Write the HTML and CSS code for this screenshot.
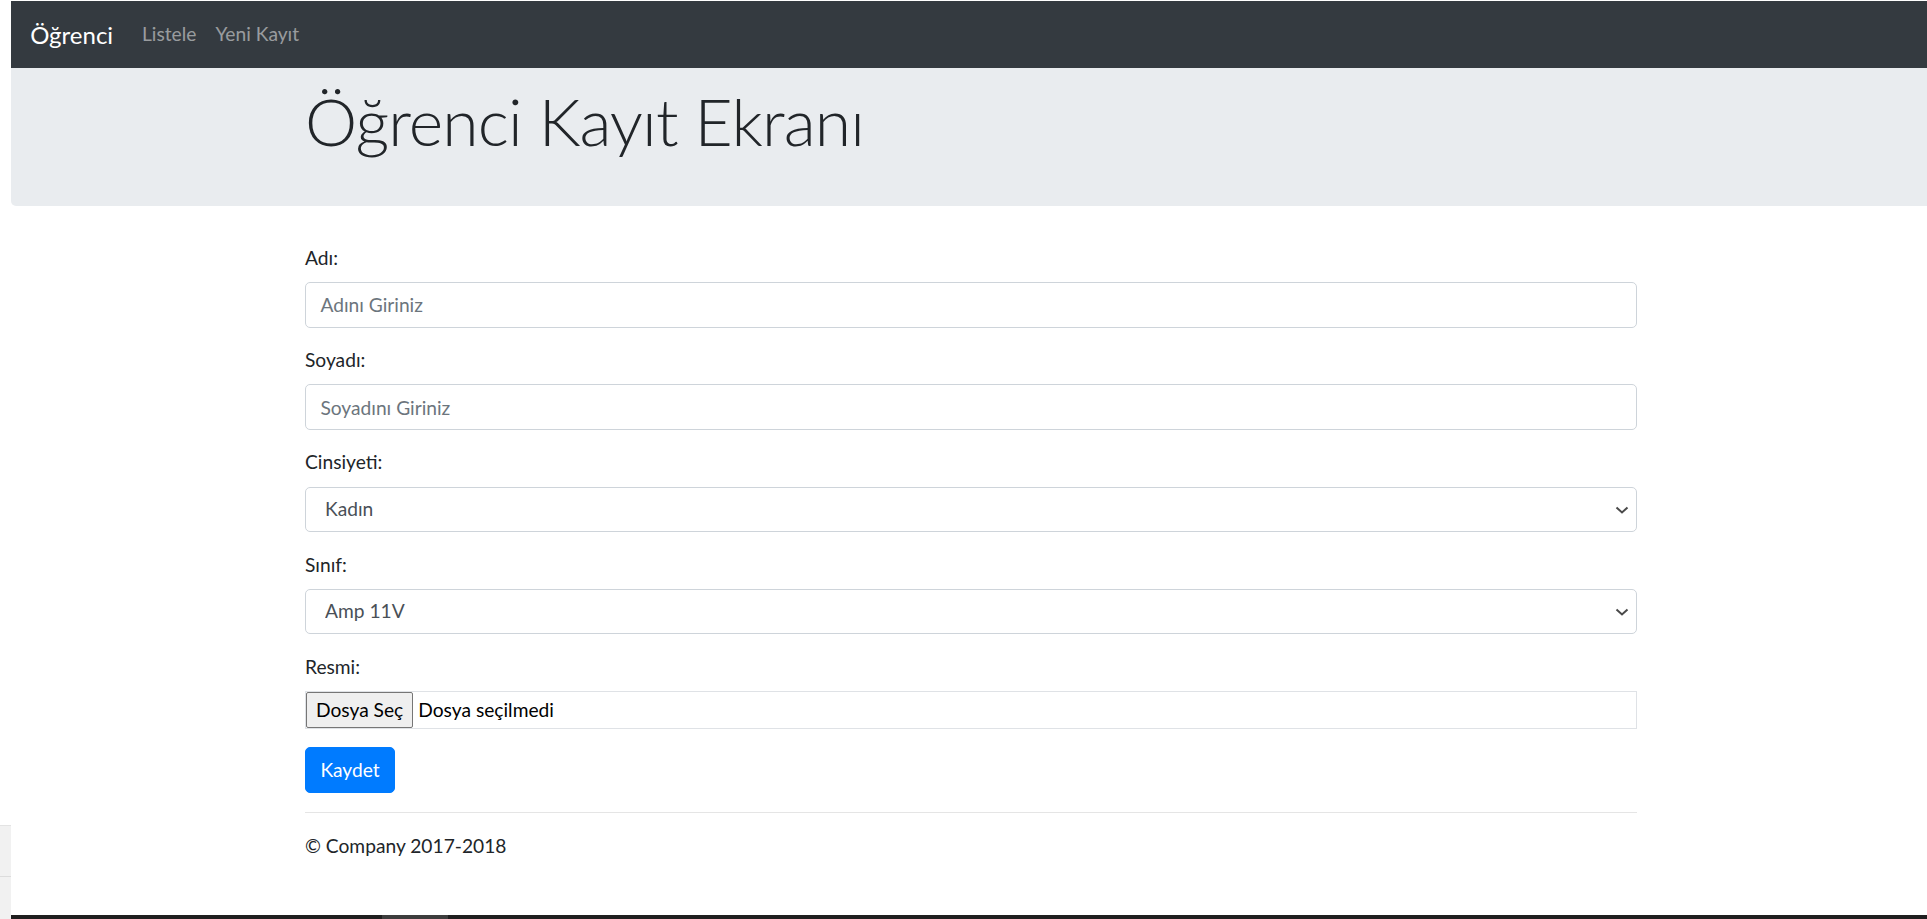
FILE: index.html
```html
<!DOCTYPE html>
<html lang="tr">
<head>
<meta charset="utf-8">
<title>Öğrenci Kayıt Ekranı</title>
<link rel="stylesheet" href="styles.css">
</head>
<body>
<div class="page">
  <nav class="navbar">
    <a class="brand" href="#">Öğrenci</a>
    <ul class="nav">
      <li><a class="nav-link" href="#">Listele</a></li>
      <li><a class="nav-link" href="#">Yeni Kayıt</a></li>
    </ul>
  </nav>
  <header class="jumbotron">
    <div class="container">
      <h1 class="display">Öğrenci Kayıt Ekranı</h1>
    </div>
  </header>
  <main class="container">
    <form class="form">
      <div class="group">
        <label class="label">Adı:</label>
        <input class="control" type="text" placeholder="Adını Giriniz">
      </div>
      <div class="group">
        <label class="label">Soyadı:</label>
        <input class="control" type="text" placeholder="Soyadını Giriniz">
      </div>
      <div class="group">
        <label class="label">Cinsiyeti:</label>
        <div class="select-wrap">
          <select class="control select"><option>Kadın</option><option>Erkek</option></select>
          <svg class="chev" width="14" height="8" viewBox="0 0 14 8"><path d="M1.5 1.5 L7 6.5 L12.5 1.5" fill="none" stroke="#4a4a4a" stroke-width="2"/></svg>
        </div>
      </div>
      <div class="group">
        <label class="label">Sınıf:</label>
        <div class="select-wrap">
          <select class="control select"><option>Amp 11V</option></select>
          <svg class="chev" width="14" height="8" viewBox="0 0 14 8"><path d="M1.5 1.5 L7 6.5 L12.5 1.5" fill="none" stroke="#4a4a4a" stroke-width="2"/></svg>
        </div>
      </div>
      <div class="group group-file">
        <label class="label">Resmi:</label>
        <div class="file-box">
          <span class="file-btn">Dosya Seç</span>
          <span class="file-name">Dosya seçilmedi</span>
        </div>
      </div>
      <button class="btn" type="button">Kaydet</button>
    </form>
    <hr class="rule">
    <footer class="footer">
      <p>© Company 2017-2018</p>
    </footer>
  </main>
</div>
<div class="side-panel"></div>
<div class="taskbar"><span class="task-item"></span></div>
</body>
</html>
```
FILE: styles.css
```css
* { box-sizing: border-box; }
html, body { margin: 0; padding: 0; }
body {
  background: #fff;
  font-family: Lato, "Open Sans", sans-serif;
  font-size: 19.2px;
  line-height: 1.5;
  color: #212529;
  overflow: hidden;
  height: 919px;
}
.page {
  margin-left: 11px;
  padding-top: 1px;
}
.navbar {
  height: 67px;
  background: #343a40;
  display: flex;
  align-items: center;
  padding: 0 19.2px;
}
.brand {
  color: #fff;
  font-size: 24px;
  text-decoration: none;
  margin-right: 19.2px;
  line-height: 1.5;
}
.nav {
  list-style: none;
  margin: 0;
  padding: 0;
  display: flex;
}
.nav-link {
  display: block;
  color: rgba(255,255,255,.5);
  text-decoration: none;
  padding: 0 9.6px;
  font-size: 19.2px;
}
.jumbotron {
  background: #e9ecef;
  border-bottom-left-radius: 5px;
  padding: 13px 0 44px;
  margin-bottom: 38.4px;
}
.container {
  width: 1332px;
  margin-left: 294px;
}
.display {
  margin: 0;
  font-size: 66px;
  font-weight: 300;
  line-height: 1.22;
  letter-spacing: -0.9px;
  color: #212529;
}
.form { margin: 0; }
.group { margin-bottom: 18.45px; }
.label {
  display: block;
  line-height: 28.8px;
  margin-bottom: 9.4px;
}
.control {
  display: block;
  width: 100%;
  height: 45.6px;
  padding: 7.2px 14.4px;
  font-family: inherit;
  font-size: 19.2px;
  line-height: 1.5;
  color: #495057;
  background: #fff;
  border: 1px solid #ced4da;
  border-radius: 5px;
  outline: none;
}
.control::placeholder { color: #6c757d; opacity: 1; }
.select-wrap { position: relative; }
.select {
  appearance: none;
  -webkit-appearance: none;
  padding-left: 19px;
}
.chev {
  position: absolute;
  right: 8px;
  top: 19px;
  pointer-events: none;
}
.file-box {
  display: flex;
  align-items: center;
  height: 38px;
  border: 1px solid #dfe2e6;
  padding: 0;
}
.file-btn {
  height: 36px;
  display: flex;
  align-items: center;
  padding: 0 9px;
  background: #efefef;
  border: 1px solid #767676;
  border-radius: 2px;
  color: #000;
  margin-right: 5px;
}
.file-name { color: #000; }
.btn {
  display: block;
  font-family: inherit;
  font-size: 19.2px;
  line-height: 1.5;
  padding: 7.2px 14.4px;
  height: 45.6px;
  color: #fff;
  background: #007bff;
  border: 1px solid #007bff;
  border-radius: 5px;
}
.rule {
  margin: 19.2px 0;
  border: 0;
  border-top: 1px solid rgba(0,0,0,.1);
}
.footer p { margin: 0; }
.side-panel {
  position: fixed;
  left: 0;
  top: 825px;
  width: 11px;
  bottom: 0;
  background: #f1f1f1;
  border-top: 1px solid #e3e3e3;
}
.side-panel::after {
  content: "";
  position: absolute;
  left: 0;
  right: 0;
  top: 50px;
  border-top: 1px solid #dcdcdc;
}
.taskbar {
  position: fixed;
  left: 11px;
  right: 0;
  bottom: 0;
  height: 4px;
  background: #1f1f1f;
}
.task-item {
  position: absolute;
  left: 371px;
  top: 0;
  width: 66px;
  height: 4px;
  background: #3d3d3d;
}
```
